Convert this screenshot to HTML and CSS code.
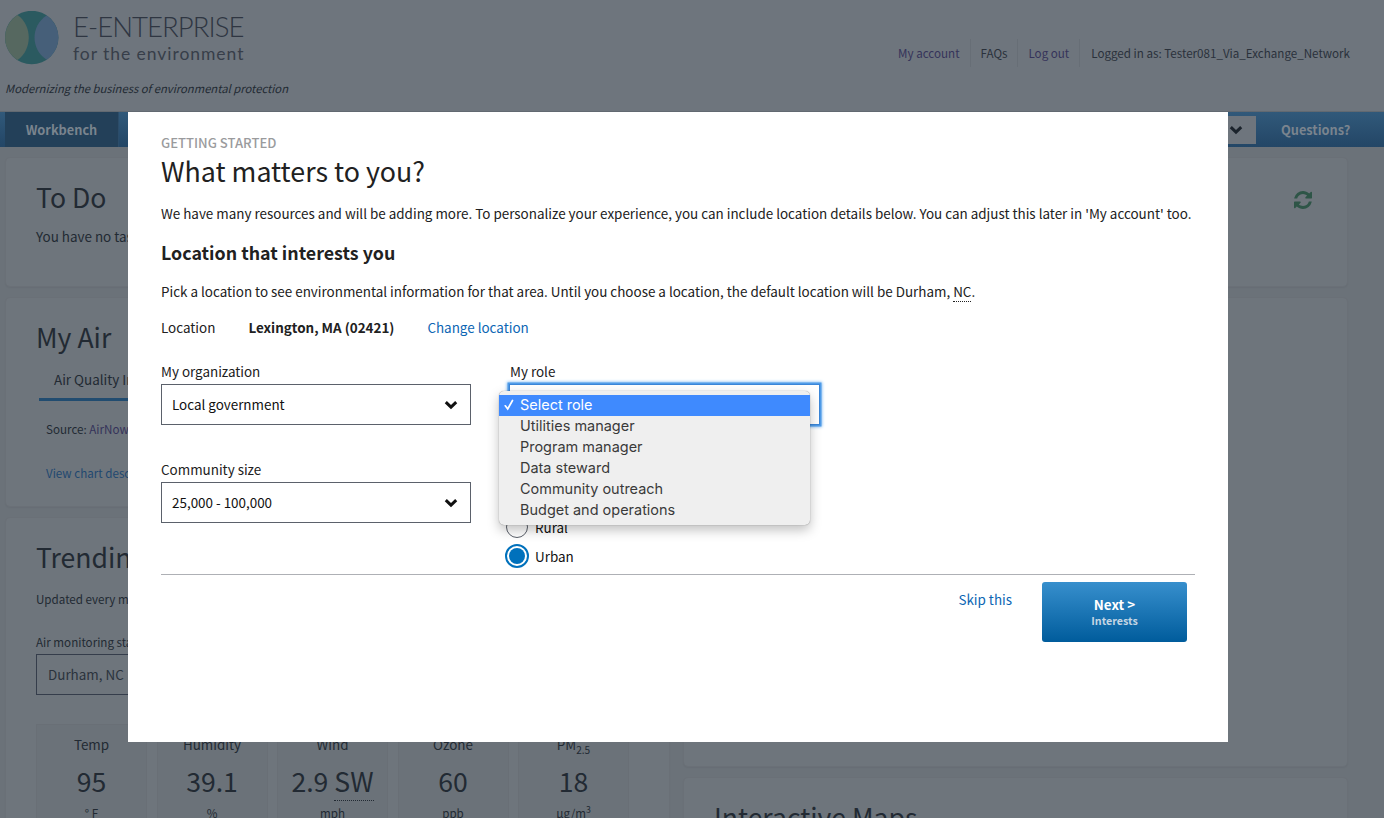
FILE: index.html
```html
<!DOCTYPE html>
<html lang="en">
<head>
<meta charset="utf-8">
<title>E-Enterprise for the Environment</title>
<link rel="stylesheet" href="styles.css">
</head>
<body>
<div class="page">
  <header class="header">
    <div class="brand">
      <div class="logo">
        <svg class="logo-mark" viewBox="0 0 54 54" aria-hidden="true">
          <circle cx="26.700" cy="26.500" r="26.700" fill="#2b5a60"/>
          <path d="M12.500 4A26.700 26.700 0 0 0 12.500 49.100C27.500 38.500 27.500 14.500 12.500 4Z" fill="#566860"/>
          <path d="M41.600 4.400A26.700 26.700 0 0 1 41.600 48.700C25.500 38.500 25.500 14.500 41.600 4.400Z" fill="#465f79"/>
        </svg>
        <div class="logo-text">
          <span class="logo-name">E-ENTERPRISE</span>
          <span class="logo-sub">for the environment</span>
        </div>
      </div>
      <p class="tagline">Modernizing the business of environmental protection</p>
    </div>
    <nav class="account">
      <a class="account-item visited">My account</a>
      <a class="account-item">FAQs</a>
      <a class="account-item visited">Log out</a>
      <span class="account-item">Logged in as: Tester081_Via_Exchange_Network</span>
    </nav>
  </header>

  <nav class="navbar">
    <a class="nav-tab">Workbench</a>
    <div class="nav-end">
      <div class="nav-select">
        <svg class="chevron" viewBox="0 0 14 10"><path d="M1.800 2.200 7 7.200 12.200 2.200" fill="none" stroke="currentColor" stroke-width="3"/></svg>
      </div>
      <a class="nav-question">Questions?</a>
    </div>
  </nav>

  <main class="board">
    <section class="card todo">
      <div>
        <h2 class="card-title">To Do</h2>
        <p class="todo-text">You have no tasks.</p>
      </div>
      <svg class="refresh" viewBox="0 0 1536 1536"><path fill="#2e5547" d="M1511 928q0 5-1 7-64 268-268 434.500t-478 166.500q-146 0-282.500-55t-243.500-157l-129 129q-19 19-45 19t-45-19-19-45v-448q0-26 19-45t45-19h448q26 0 45 19t19 45-19 45l-137 137q71 66 161 102t187 36q134 0 250-65t186-179q11-17 53-117 8-23 30-23h192q13 0 22.500 9.500t9.500 22.500zm25-800v448q0 26-19 45t-45 19h-448q-26 0-45-19t-19-45 19-45l138-138q-148-137-349-137-134 0-250 65t-186 179q-11 17-53 117-8 23-30 23h-199q-13 0-22.500-9.500t-9.500-22.500v-7q65-268 270-434.500t480-166.500q146 0 284 55.500t245 156.500l130-129q19-19 45-19t45 19 19 45z"/></svg>
    </section>

    <div class="columns">
      <div class="column">
        <section class="card air">
          <h2 class="card-title">My Air</h2>
          <div class="tabs"><span class="tab">Air Quality Index</span></div>
          <p class="air-source">Source: <a class="visited">AirNow</a></p>
          <p class="air-link"><a>View chart description</a></p>
        </section>
        <section class="card trending">
          <h2 class="card-title">Trending</h2>
          <p class="small updated">Updated every morning</p>
          <p class="small station-label">Air monitoring station</p>
          <div class="station">Durham, NC</div>
          <div class="tiles">
            <div class="tile"><span class="tile-name">Temp</span><span class="tile-value">95</span><span class="tile-unit">° F</span></div>
            <div class="tile"><span class="tile-name">Humidity</span><span class="tile-value">39.1</span><span class="tile-unit">%</span></div>
            <div class="tile"><span class="tile-name">Wind</span><span class="tile-value">2.9 <span class="dotted">SW</span></span><span class="tile-unit">mph</span></div>
            <div class="tile"><span class="tile-name">Ozone</span><span class="tile-value">60</span><span class="tile-unit">ppb</span></div>
            <div class="tile"><span class="tile-name">PM<sub>2.5</sub></span><span class="tile-value">18</span><span class="tile-unit">µg/m<sup>3</sup></span></div>
          </div>
        </section>
      </div>
      <div class="column">
        <section class="card blank"></section>
        <section class="card maps"><h2 class="card-title">Interactive Maps</h2></section>
      </div>
    </div>
  </main>
</div>

<div class="modal" role="dialog">
  <p class="eyebrow">GETTING STARTED</p>
  <h1 class="modal-title">What matters to you?</h1>
  <p class="intro">We have many resources and will be adding more. To personalize your experience, you can include location details below. You can adjust this later in 'My account' too.</p>
  <h2 class="section-title">Location that interests you</h2>
  <p class="hint">Pick a location to see environmental information for that area. Until you choose a location, the default location will be Durham, <abbr class="dotted">NC</abbr>.</p>
  <div class="location">
    <span class="location-label">Location</span>
    <strong class="location-value">Lexington, MA (02421)</strong>
    <a class="link">Change location</a>
  </div>
  <div class="form">
    <div class="form-col">
      <div class="field">
        <span class="label">My organization</span>
        <div class="select">Local government
          <svg class="chevron" viewBox="0 0 14 10"><path d="M1.800 2.200 7 7.200 12.200 2.200" fill="none" stroke="currentColor" stroke-width="3"/></svg>
        </div>
      </div>
      <div class="field">
        <span class="label">Community size</span>
        <div class="select">25,000 - 100,000
          <svg class="chevron" viewBox="0 0 14 10"><path d="M1.800 2.200 7 7.200 12.200 2.200" fill="none" stroke="currentColor" stroke-width="3"/></svg>
        </div>
      </div>
    </div>
    <div class="form-col role-col">
      <div class="field">
        <span class="label">My role</span>
        <div class="select focused"></div>
        <ul class="menu">
          <li class="menu-item selected"><svg class="tick" viewBox="0 0 10 12"><path d="M1.300 6.800 3.700 10 8.500 1.500" fill="none" stroke="#fff" stroke-width="1.700" stroke-linecap="round"/></svg>Select role</li>
          <li class="menu-item">Utilities manager</li>
          <li class="menu-item">Program manager</li>
          <li class="menu-item">Data steward</li>
          <li class="menu-item">Community outreach</li>
          <li class="menu-item">Budget and operations</li>
        </ul>
      </div>
      <div class="radios">
        <div class="radio-row"><span class="radio"></span>Rural</div>
        <div class="radio-row"><span class="radio on"></span>Urban</div>
      </div>
    </div>
  </div>
  <footer class="modal-footer">
    <a class="link skip">Skip this</a>
    <div class="next"><span class="next-main">Next &gt;</span><span class="next-sub">Interests</span></div>
  </footer>
</div>
</body>
</html>
```
FILE: styles.css
```css
* { box-sizing: border-box; }
body {
  margin: 0;
  height: 818px;
  overflow: hidden;
  font-family: "Noto Sans CJK SC", "Noto Sans", sans-serif;
  font-size: 13.43px;
  line-height: 20px;
  color: #212121;
}
h1, h2, p, ul { margin: 0; padding: 0; font-weight: 400; }

/* Dimmed page behind the dialog */
.page { height: 818px; overflow: hidden; background: #6b7279; color: #222a33; }
.header {
  height: 112px;
  padding: 11px 34px 0 5px;
  display: flex;
  justify-content: space-between;
  background: #6e757d;
  border-bottom: 1px solid #626971;
}
.logo { display: flex; gap: 14px; }
.logo-mark { width: 54px; height: 54px; }
.logo-text { display: flex; flex-direction: column; font-family: Lato, sans-serif; color: #2f3642; white-space: nowrap; }
.logo-name { font-weight: 300; font-size: 27.5px; line-height: 32px; letter-spacing: -.95px; }
.logo-sub { font-size: 17.5px; line-height: 22px; letter-spacing: .95px; color: #373e49; }
.tagline { font-size: 11.25px; font-style: italic; line-height: 20px; margin-top: 13px; white-space: nowrap; }
.account { display: flex; height: 28px; margin-top: 28px; font-size: 11.62px; line-height: 28px; color: #2a313b; }
.account-item { padding: 0 10px; border-left: 1px solid #676e76; white-space: nowrap; }
.account-item:first-child { border-left: 0; }
.account-item:last-child { padding: 0 0 0 11px; }
.visited { color: #35335a; }

.navbar {
  height: 35px;
  display: flex;
  justify-content: space-between;
  padding-left: 5px;
  background: linear-gradient(#31597a, #234666);
  color: #7a848e;
  font-weight: 700;
  font-size: 12.75px;
}
.nav-tab { width: 114px; text-align: center; line-height: 35px; background: #234059; border-right: 1px solid #2b4c69; }
.nav-end { display: flex; }
.nav-select { width: 170px; height: 28px; margin-top: 4px; background: #6e757d; color: #1b232c; display: flex; align-items: center; justify-content: flex-end; padding-right: 13px; }
.nav-question { width: 128px; padding-left: 25px; line-height: 35px; }

.board { padding: 10px 36px 0 5px; }
.card { background: #6e757c; border: 1px solid #6a7077; border-radius: 5px; padding: 23px 30px 0; box-shadow: 0 1px 1px rgba(60,68,76,.08); }
.card-title { font-size: 26.6px; line-height: 32px; white-space: nowrap; }
.todo { height: 130px; display: flex; justify-content: space-between; }
.todo-text { margin-top: 13px; }
.refresh { width: 18px; height: 18px; margin: 10px 5px 0 0; }
.columns { display: flex; gap: 13px; margin-top: 10px; }
.column { width: 665px; display: flex; flex-direction: column; gap: 10px; }
.air { height: 210px; }
.tabs { margin: 15px 0 0 3px; }
.tab { display: block; width: 180px; height: 33px; padding: 1px 0 0 15px; border-bottom: 3px solid #214c70; }
.air-source { font-size: 11.62px; margin: 18px 0 0 10px; }
.air-link { font-size: 11.62px; margin: 24px 0 0 10px; color: #1f4870; }
.trending { height: 400px; }
.small { font-size: 11.62px; }
.updated { margin-top: 16px; }
.station-label { margin-top: 23px; }
.station { margin-top: 2px; width: 300px; height: 41px; padding-left: 11px; line-height: 39px; border: 1px solid #353d4b; color: #2b333d; }
.tiles { display: flex; gap: 9.5px; margin-top: 29px; }
.tile { width: 111px; flex: none; height: 150px; padding-top: 9px; display: flex; flex-direction: column; align-items: center; background: #6b7279; border: 1px solid #696f76; }
.tile-name { line-height: 20px; }
.tile-value { font-size: 26.6px; line-height: 32px; height: 32px; margin-top: 11px; }
.tile-unit { font-size: 11.62px; line-height: 20px; margin-top: 6px; }
sub, sup { font-size: 75%; line-height: 0; }
.dotted { text-decoration: none; border-bottom: 1px dotted currentColor; }
.tile-value .dotted { display: inline-block; line-height: 32px; height: 36px; }
.blank { height: 470px; }
.maps { height: 300px; }
.chevron { width: 14px; height: 10px; flex: none; }

/* Dialog */
.modal { position: absolute; left: 128px; top: 112px; width: 1100px; height: 630px; padding: 21px 33px 0; background: #fff; }
.eyebrow { font-weight: 500; font-size: 13.1px; line-height: 20px; color: #9a9b9d; }
.modal-title { font-size: 26.8px; line-height: 32px; margin-top: 2px; }
.intro { margin-top: 16px; white-space: nowrap; }
.section-title { font-size: 17.84px; font-weight: 700; line-height: 24px; margin-top: 17px; }
.hint { margin-top: 17px; height: 20px; white-space: nowrap; }
.hint .dotted { display: inline-block; height: 21px; }
.location { display: flex; gap: 33px; margin-top: 16px; white-space: nowrap; }
.link { color: #0c66b4; }
.form { display: flex; gap: 38px; margin-top: 24px; height: 212px; }
.form-col { width: 310px; }
.field { position: relative; height: 98px; }
.label { display: block; line-height: 20px; }
.select { height: 41px; margin-top: 3px; padding: 0 12.5px 0 10px; border: 1px solid #5b616b; line-height: 39px; display: flex; align-items: center; justify-content: space-between; color: #111; }
.role-col { width: 311px; }
.role-col .label { padding-left: 1px; }
.select.focused { width: 311px; border: 1px solid #3b86d8; box-shadow: 0 0 0 1.5px #4f9be8, 0 0 3px 2px #7fb9f2; background: #fff; }
.menu {
  position: absolute;
  left: -10px;
  top: 30px;
  width: 311px;
  height: 134px;
  padding-top: 4px;
  list-style: none;
  background: #efefef;
  border-radius: 5px;
  box-shadow: 0 0 1px rgba(0,0,0,.5), 0 5px 12px rgba(0,0,0,.25);
  font-family: Inter, Roboto, sans-serif;
  font-size: 14.48px;
  color: #3a3a3a;
}
.menu-item { position: relative; height: 21px; line-height: 19px; padding-left: 21px; }
.menu-item.selected { background: #3f8afe; color: #fff; }
.tick { position: absolute; left: 5px; top: 4px; width: 10px; height: 12px; }
.radios { padding-top: 53px; margin-left: -4px; }
.radio-row { display: flex; align-items: center; gap: 6px; height: 29px; color: #111; }
.radio { width: 24px; height: 24px; border-radius: 50%; border: 1px solid #5b616b; background-clip: content-box; }
.radio:not(.on) { width: 22px; height: 22px; margin: 0 1px; }
.radio.on { border: 2px solid #0071bc; padding: 2px; background-color: #0071bc; }
.modal-footer { border-top: 1px solid #aeb0b5; display: flex; justify-content: flex-end; gap: 30px; padding: 7px 8px 0 0; }
.form + .modal-footer { margin-top: 1px; }
.skip { margin-top: 7px; }
.next { width: 145px; height: 60px; padding-top: 13px; border-radius: 3px; background: linear-gradient(#378fcd, #005c9c); color: #fff; font-weight: 700; display: flex; flex-direction: column; align-items: center; }
.next-main { line-height: 18px; }
.next-sub { font-size: 10.73px; line-height: 15px; color: #c4d6e4; }
```
